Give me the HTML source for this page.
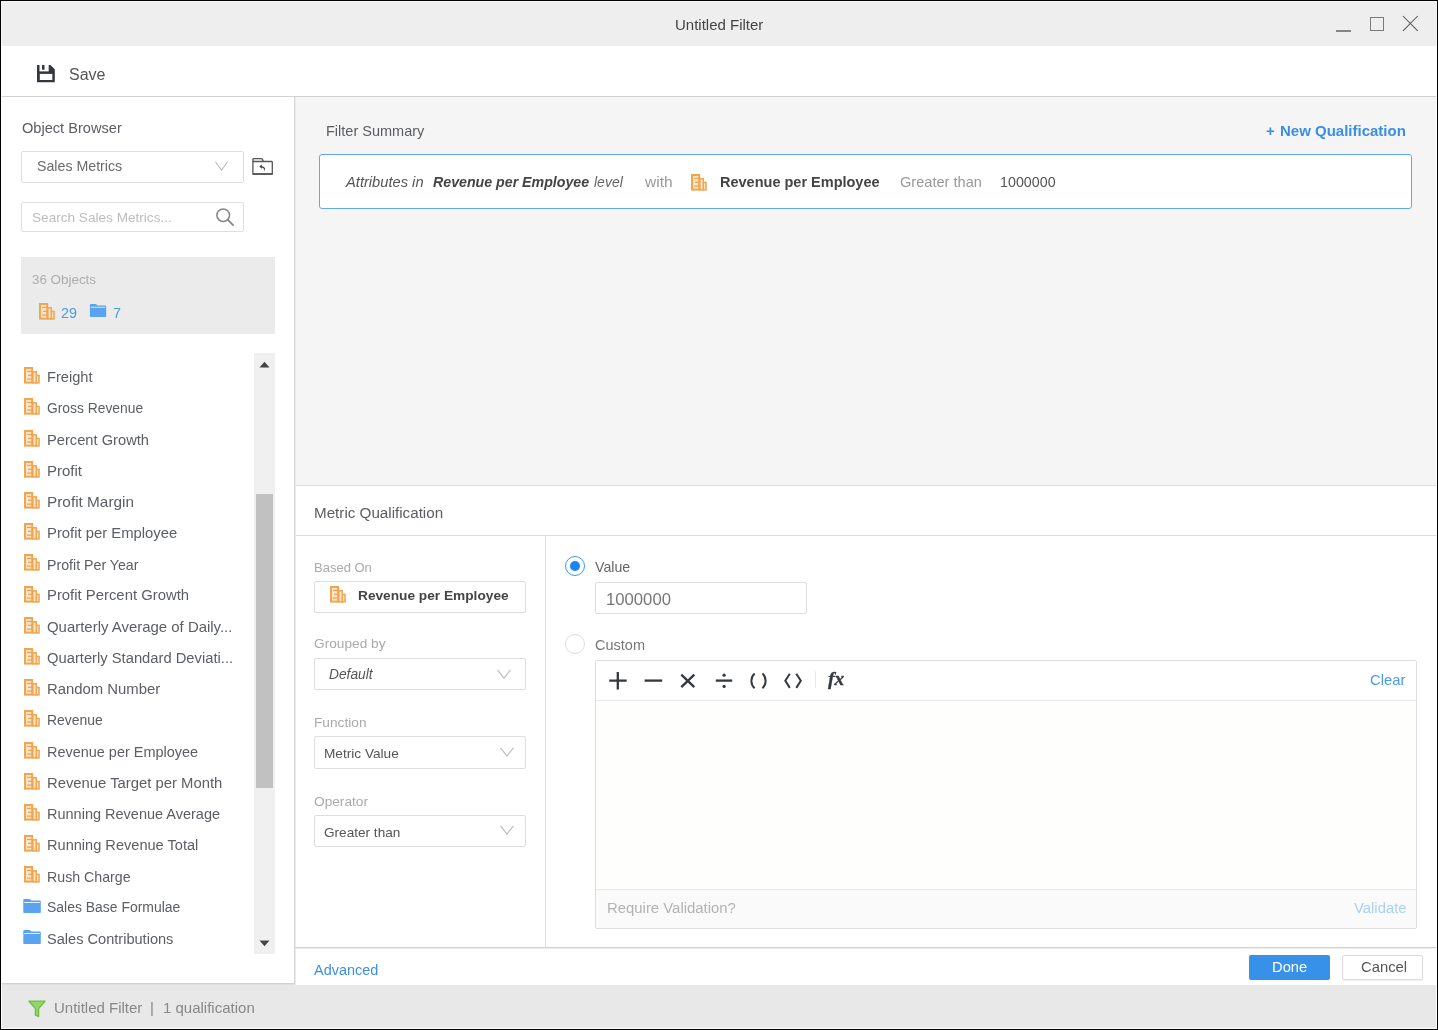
<!DOCTYPE html><html><head><meta charset="utf-8"><style>
html,body{margin:0;padding:0;width:1438px;height:1030px;overflow:hidden;background:#fff;}
body{position:relative;font-family:"Liberation Sans",sans-serif;}
.t{position:absolute;line-height:1;white-space:nowrap;will-change:transform;}
.r{position:absolute;box-sizing:border-box;}
</style></head><body>
<div class="r" style="left:0px;top:0px;width:1438px;height:1030px;background:#000"></div>
<div class="r" style="left:1px;top:1px;width:1436px;height:1028px;background:#fff"></div>
<div class="r" style="left:1px;top:1px;width:1436px;height:45px;background:#f6f6f6"></div>
<div class="r" style="left:2px;top:2px;width:1434px;height:44px;background:#eeeeee"></div>
<div class="t" style="left:674.60px;top:17.30px;font-size:15px;color:#444;">Untitled Filter</div>
<div class="r" style="left:1336px;top:30px;width:15px;height:1.5px;background:#858585"></div>
<div class="r" style="left:1370.3px;top:17.2px;width:14px;height:14px;border:1.4px solid #7a7a7a"></div>
<svg class="r" style="left:1402px;top:15px" width="17" height="17" viewBox="0 0 17 17"><path d="M1 1L15.7 15.9M15.7 1L1 15.9" stroke="#555" stroke-width="1.05"/></svg>
<div class="r" style="left:2px;top:96px;width:1434px;height:1px;background:#d0d0d0"></div>
<svg class="r" style="left:37px;top:65px" width="18" height="18" viewBox="0 0 18 18"><path d="M0 0H13.4L17.8 4.2V17.2H0Z" fill="#33383c"/><rect x="2.5" y="0" width="9.2" height="6.4" fill="#fff"/><rect x="5" y="0" width="2.5" height="4.7" fill="#33383c"/><rect x="2.8" y="8.9" width="12.5" height="6.1" fill="#fff"/></svg>
<div class="t" style="left:69.20px;top:67.16px;font-size:16px;color:#555;">Save</div>
<div class="r" style="left:294px;top:97px;width:1px;height:888px;background:#d6d6d6"></div>
<div class="r" style="left:295px;top:97px;width:1px;height:888px;background:#ececec"></div>
<div class="t" style="left:21.70px;top:120.94px;font-size:14.6px;color:#5a5d61;">Object Browser</div>
<div class="r" style="left:21px;top:151px;width:223px;height:32px;border:1px solid #dedede;border-radius:2px;background:#fff"></div>
<div class="t" style="left:36.70px;top:159.28px;font-size:14.2px;color:#6a6a6a;">Sales Metrics</div>
<svg class="r" style="left:215px;top:161px" width="13" height="10" viewBox="0 0 13 10"><path d="M0.5 0.8L6.5 9.2L12.5 0.8" fill="none" stroke="#bbb" stroke-width="1.1"/></svg>
<svg class="r" style="left:251px;top:157px" width="23" height="19" viewBox="0 0 23 19"><path d="M1.9 4.5V2.4Q1.9 1.6 2.7 1.6H10.3Q10.9 1.6 11.3 2.2L12.5 4.5H20.5Q21.3 4.5 21.3 5.3V17H1.9V4.5H12.5" fill="none" stroke="#555" stroke-width="1.3"/><rect x="1.9" y="16.2" width="19.4" height="1.6" fill="#555"/><path d="M12.5 15.3Q14.6 11.5 10.8 10.4L10.8 11.8L8.3 9.6L10.8 7.5L10.8 8.9Q16.4 10.3 12.5 15.3Z" fill="#444"/></svg>
<div class="r" style="left:21px;top:202px;width:223px;height:30px;border:1px solid #dedede;border-radius:2px;background:#fff"></div>
<div class="t" style="left:31.50px;top:210.69px;font-size:13.6px;color:#bdbdbd;">Search Sales Metrics...</div>
<svg class="r" style="left:215px;top:207px" width="21" height="20" viewBox="0 0 21 20"><circle cx="8.2" cy="8.2" r="6.3" fill="none" stroke="#858585" stroke-width="1.5"/><path d="M12.8 12.8L18.6 18.6" stroke="#858585" stroke-width="1.7"/></svg>
<div class="r" style="left:21px;top:257px;width:254px;height:77px;background:#ebebeb"></div>
<div class="t" style="left:31.50px;top:272.86px;font-size:13.4px;color:#adadad;">36 Objects</div>
<svg class="r" style="left:39px;top:303px" width="16" height="17" viewBox="0 0 16 17"><g fill="#fde6c9" stroke="#efa552"><rect x="11.75" y="8.45" width="3.3" height="7.4" stroke-width="1.5"/><rect x="8.75" y="4.85" width="3.5" height="11" stroke-width="1.5"/><rect x="1" y="1" width="7.2" height="14.6" stroke-width="2"/></g><g stroke="#efa552" stroke-width="1.3"><line x1="3" y1="4.4" x2="8.2" y2="4.4"/><line x1="4" y1="8.3" x2="8.2" y2="8.3"/><line x1="3" y1="12.1" x2="8.2" y2="12.1"/></g></svg><div class="t" style="left:61.00px;top:305.81px;font-size:14.4px;color:#4a9be8;">29</div>
<svg class="r" style="left:89px;top:304px" width="18" height="13" viewBox="0 0 18 14"><path d="M0.3 1 Q0.3 0 1.3 0 L6 0 Q6.8 0 7.4 0.6 L8.3 1.5 L17 1.5 Q17.8 1.5 17.8 2.3 L17.8 13.3 Q17.8 14 17 14 L1 14 Q0.3 14 0.3 13.3 Z" fill="#59a4f1"/><rect x="1.3" y="3" width="15.5" height="1" fill="#e4f0fd"/></svg><div class="t" style="left:112.60px;top:305.81px;font-size:14.4px;color:#4a9be8;">7</div>
<svg class="r" style="left:24px;top:367.2px" width="16" height="17" viewBox="0 0 16 17"><g fill="#fde6c9" stroke="#efa552"><rect x="11.75" y="8.45" width="3.3" height="7.4" stroke-width="1.5"/><rect x="8.75" y="4.85" width="3.5" height="11" stroke-width="1.5"/><rect x="1" y="1" width="7.2" height="14.6" stroke-width="2"/></g><g stroke="#efa552" stroke-width="1.3"><line x1="3" y1="4.4" x2="8.2" y2="4.4"/><line x1="4" y1="8.3" x2="8.2" y2="8.3"/><line x1="3" y1="12.1" x2="8.2" y2="12.1"/></g></svg><div class="t" style="left:46.70px;top:370.22px;font-size:14.63px;color:#5b5e62;">Freight</div>
<svg class="r" style="left:24px;top:398.4px" width="16" height="17" viewBox="0 0 16 17"><g fill="#fde6c9" stroke="#efa552"><rect x="11.75" y="8.45" width="3.3" height="7.4" stroke-width="1.5"/><rect x="8.75" y="4.85" width="3.5" height="11" stroke-width="1.5"/><rect x="1" y="1" width="7.2" height="14.6" stroke-width="2"/></g><g stroke="#efa552" stroke-width="1.3"><line x1="3" y1="4.4" x2="8.2" y2="4.4"/><line x1="4" y1="8.3" x2="8.2" y2="8.3"/><line x1="3" y1="12.1" x2="8.2" y2="12.1"/></g></svg><div class="t" style="left:46.70px;top:402.08px;font-size:13.84px;color:#5b5e62;">Gross Revenue</div>
<svg class="r" style="left:24px;top:429.6px" width="16" height="17" viewBox="0 0 16 17"><g fill="#fde6c9" stroke="#efa552"><rect x="11.75" y="8.45" width="3.3" height="7.4" stroke-width="1.5"/><rect x="8.75" y="4.85" width="3.5" height="11" stroke-width="1.5"/><rect x="1" y="1" width="7.2" height="14.6" stroke-width="2"/></g><g stroke="#efa552" stroke-width="1.3"><line x1="3" y1="4.4" x2="8.2" y2="4.4"/><line x1="4" y1="8.3" x2="8.2" y2="8.3"/><line x1="3" y1="12.1" x2="8.2" y2="12.1"/></g></svg><div class="t" style="left:46.70px;top:432.56px;font-size:14.69px;color:#5b5e62;">Percent Growth</div>
<svg class="r" style="left:24px;top:460.8px" width="16" height="17" viewBox="0 0 16 17"><g fill="#fde6c9" stroke="#efa552"><rect x="11.75" y="8.45" width="3.3" height="7.4" stroke-width="1.5"/><rect x="8.75" y="4.85" width="3.5" height="11" stroke-width="1.5"/><rect x="1" y="1" width="7.2" height="14.6" stroke-width="2"/></g><g stroke="#efa552" stroke-width="1.3"><line x1="3" y1="4.4" x2="8.2" y2="4.4"/><line x1="4" y1="8.3" x2="8.2" y2="8.3"/><line x1="3" y1="12.1" x2="8.2" y2="12.1"/></g></svg><div class="t" style="left:46.70px;top:463.49px;font-size:15.02px;color:#5b5e62;">Profit</div>
<svg class="r" style="left:24px;top:492.0px" width="16" height="17" viewBox="0 0 16 17"><g fill="#fde6c9" stroke="#efa552"><rect x="11.75" y="8.45" width="3.3" height="7.4" stroke-width="1.5"/><rect x="8.75" y="4.85" width="3.5" height="11" stroke-width="1.5"/><rect x="1" y="1" width="7.2" height="14.6" stroke-width="2"/></g><g stroke="#efa552" stroke-width="1.3"><line x1="3" y1="4.4" x2="8.2" y2="4.4"/><line x1="4" y1="8.3" x2="8.2" y2="8.3"/><line x1="3" y1="12.1" x2="8.2" y2="12.1"/></g></svg><div class="t" style="left:46.70px;top:494.41px;font-size:15.35px;color:#5b5e62;">Profit Margin</div>
<svg class="r" style="left:24px;top:523.2px" width="16" height="17" viewBox="0 0 16 17"><g fill="#fde6c9" stroke="#efa552"><rect x="11.75" y="8.45" width="3.3" height="7.4" stroke-width="1.5"/><rect x="8.75" y="4.85" width="3.5" height="11" stroke-width="1.5"/><rect x="1" y="1" width="7.2" height="14.6" stroke-width="2"/></g><g stroke="#efa552" stroke-width="1.3"><line x1="3" y1="4.4" x2="8.2" y2="4.4"/><line x1="4" y1="8.3" x2="8.2" y2="8.3"/><line x1="3" y1="12.1" x2="8.2" y2="12.1"/></g></svg><div class="t" style="left:46.70px;top:526.05px;font-size:14.83px;color:#5b5e62;">Profit per Employee</div>
<svg class="r" style="left:24px;top:554.4px" width="16" height="17" viewBox="0 0 16 17"><g fill="#fde6c9" stroke="#efa552"><rect x="11.75" y="8.45" width="3.3" height="7.4" stroke-width="1.5"/><rect x="8.75" y="4.85" width="3.5" height="11" stroke-width="1.5"/><rect x="1" y="1" width="7.2" height="14.6" stroke-width="2"/></g><g stroke="#efa552" stroke-width="1.3"><line x1="3" y1="4.4" x2="8.2" y2="4.4"/><line x1="4" y1="8.3" x2="8.2" y2="8.3"/><line x1="3" y1="12.1" x2="8.2" y2="12.1"/></g></svg><div class="t" style="left:46.70px;top:557.79px;font-size:14.19px;color:#5b5e62;">Profit Per Year</div>
<svg class="r" style="left:24px;top:585.6px" width="16" height="17" viewBox="0 0 16 17"><g fill="#fde6c9" stroke="#efa552"><rect x="11.75" y="8.45" width="3.3" height="7.4" stroke-width="1.5"/><rect x="8.75" y="4.85" width="3.5" height="11" stroke-width="1.5"/><rect x="1" y="1" width="7.2" height="14.6" stroke-width="2"/></g><g stroke="#efa552" stroke-width="1.3"><line x1="3" y1="4.4" x2="8.2" y2="4.4"/><line x1="4" y1="8.3" x2="8.2" y2="8.3"/><line x1="3" y1="12.1" x2="8.2" y2="12.1"/></g></svg><div class="t" style="left:46.70px;top:588.41px;font-size:14.87px;color:#5b5e62;">Profit Percent Growth</div>
<svg class="r" style="left:24px;top:616.8px" width="16" height="17" viewBox="0 0 16 17"><g fill="#fde6c9" stroke="#efa552"><rect x="11.75" y="8.45" width="3.3" height="7.4" stroke-width="1.5"/><rect x="8.75" y="4.85" width="3.5" height="11" stroke-width="1.5"/><rect x="1" y="1" width="7.2" height="14.6" stroke-width="2"/></g><g stroke="#efa552" stroke-width="1.3"><line x1="3" y1="4.4" x2="8.2" y2="4.4"/><line x1="4" y1="8.3" x2="8.2" y2="8.3"/><line x1="3" y1="12.1" x2="8.2" y2="12.1"/></g></svg><div class="t" style="left:46.70px;top:619.54px;font-size:14.95px;color:#5b5e62;">Quarterly Average of Daily...</div>
<svg class="r" style="left:24px;top:648.0px" width="16" height="17" viewBox="0 0 16 17"><g fill="#fde6c9" stroke="#efa552"><rect x="11.75" y="8.45" width="3.3" height="7.4" stroke-width="1.5"/><rect x="8.75" y="4.85" width="3.5" height="11" stroke-width="1.5"/><rect x="1" y="1" width="7.2" height="14.6" stroke-width="2"/></g><g stroke="#efa552" stroke-width="1.3"><line x1="3" y1="4.4" x2="8.2" y2="4.4"/><line x1="4" y1="8.3" x2="8.2" y2="8.3"/><line x1="3" y1="12.1" x2="8.2" y2="12.1"/></g></svg><div class="t" style="left:46.70px;top:650.91px;font-size:14.76px;color:#5b5e62;">Quarterly Standard Deviati...</div>
<svg class="r" style="left:24px;top:679.2px" width="16" height="17" viewBox="0 0 16 17"><g fill="#fde6c9" stroke="#efa552"><rect x="11.75" y="8.45" width="3.3" height="7.4" stroke-width="1.5"/><rect x="8.75" y="4.85" width="3.5" height="11" stroke-width="1.5"/><rect x="1" y="1" width="7.2" height="14.6" stroke-width="2"/></g><g stroke="#efa552" stroke-width="1.3"><line x1="3" y1="4.4" x2="8.2" y2="4.4"/><line x1="4" y1="8.3" x2="8.2" y2="8.3"/><line x1="3" y1="12.1" x2="8.2" y2="12.1"/></g></svg><div class="t" style="left:46.70px;top:682.00px;font-size:14.88px;color:#5b5e62;">Random Number</div>
<svg class="r" style="left:24px;top:710.4px" width="16" height="17" viewBox="0 0 16 17"><g fill="#fde6c9" stroke="#efa552"><rect x="11.75" y="8.45" width="3.3" height="7.4" stroke-width="1.5"/><rect x="8.75" y="4.85" width="3.5" height="11" stroke-width="1.5"/><rect x="1" y="1" width="7.2" height="14.6" stroke-width="2"/></g><g stroke="#efa552" stroke-width="1.3"><line x1="3" y1="4.4" x2="8.2" y2="4.4"/><line x1="4" y1="8.3" x2="8.2" y2="8.3"/><line x1="3" y1="12.1" x2="8.2" y2="12.1"/></g></svg><div class="t" style="left:46.70px;top:713.99px;font-size:13.95px;color:#5b5e62;">Revenue</div>
<svg class="r" style="left:24px;top:741.6px" width="16" height="17" viewBox="0 0 16 17"><g fill="#fde6c9" stroke="#efa552"><rect x="11.75" y="8.45" width="3.3" height="7.4" stroke-width="1.5"/><rect x="8.75" y="4.85" width="3.5" height="11" stroke-width="1.5"/><rect x="1" y="1" width="7.2" height="14.6" stroke-width="2"/></g><g stroke="#efa552" stroke-width="1.3"><line x1="3" y1="4.4" x2="8.2" y2="4.4"/><line x1="4" y1="8.3" x2="8.2" y2="8.3"/><line x1="3" y1="12.1" x2="8.2" y2="12.1"/></g></svg><div class="t" style="left:46.70px;top:744.76px;font-size:14.46px;color:#5b5e62;">Revenue per Employee</div>
<svg class="r" style="left:24px;top:772.8px" width="16" height="17" viewBox="0 0 16 17"><g fill="#fde6c9" stroke="#efa552"><rect x="11.75" y="8.45" width="3.3" height="7.4" stroke-width="1.5"/><rect x="8.75" y="4.85" width="3.5" height="11" stroke-width="1.5"/><rect x="1" y="1" width="7.2" height="14.6" stroke-width="2"/></g><g stroke="#efa552" stroke-width="1.3"><line x1="3" y1="4.4" x2="8.2" y2="4.4"/><line x1="4" y1="8.3" x2="8.2" y2="8.3"/><line x1="3" y1="12.1" x2="8.2" y2="12.1"/></g></svg><div class="t" style="left:46.70px;top:775.65px;font-size:14.83px;color:#5b5e62;">Revenue Target per Month</div>
<svg class="r" style="left:24px;top:804.0px" width="16" height="17" viewBox="0 0 16 17"><g fill="#fde6c9" stroke="#efa552"><rect x="11.75" y="8.45" width="3.3" height="7.4" stroke-width="1.5"/><rect x="8.75" y="4.85" width="3.5" height="11" stroke-width="1.5"/><rect x="1" y="1" width="7.2" height="14.6" stroke-width="2"/></g><g stroke="#efa552" stroke-width="1.3"><line x1="3" y1="4.4" x2="8.2" y2="4.4"/><line x1="4" y1="8.3" x2="8.2" y2="8.3"/><line x1="3" y1="12.1" x2="8.2" y2="12.1"/></g></svg><div class="t" style="left:46.70px;top:807.12px;font-size:14.51px;color:#5b5e62;">Running Revenue Average</div>
<svg class="r" style="left:24px;top:835.2px" width="16" height="17" viewBox="0 0 16 17"><g fill="#fde6c9" stroke="#efa552"><rect x="11.75" y="8.45" width="3.3" height="7.4" stroke-width="1.5"/><rect x="8.75" y="4.85" width="3.5" height="11" stroke-width="1.5"/><rect x="1" y="1" width="7.2" height="14.6" stroke-width="2"/></g><g stroke="#efa552" stroke-width="1.3"><line x1="3" y1="4.4" x2="8.2" y2="4.4"/><line x1="4" y1="8.3" x2="8.2" y2="8.3"/><line x1="3" y1="12.1" x2="8.2" y2="12.1"/></g></svg><div class="t" style="left:46.70px;top:838.25px;font-size:14.59px;color:#5b5e62;">Running Revenue Total</div>
<svg class="r" style="left:24px;top:866.4px" width="16" height="17" viewBox="0 0 16 17"><g fill="#fde6c9" stroke="#efa552"><rect x="11.75" y="8.45" width="3.3" height="7.4" stroke-width="1.5"/><rect x="8.75" y="4.85" width="3.5" height="11" stroke-width="1.5"/><rect x="1" y="1" width="7.2" height="14.6" stroke-width="2"/></g><g stroke="#efa552" stroke-width="1.3"><line x1="3" y1="4.4" x2="8.2" y2="4.4"/><line x1="4" y1="8.3" x2="8.2" y2="8.3"/><line x1="3" y1="12.1" x2="8.2" y2="12.1"/></g></svg><div class="t" style="left:46.70px;top:869.79px;font-size:14.19px;color:#5b5e62;">Rush Charge</div>
<svg class="r" style="left:23px;top:899.1px" width="18" height="14" viewBox="0 0 18 14"><path d="M0.3 1 Q0.3 0 1.3 0 L6 0 Q6.8 0 7.4 0.6 L8.3 1.5 L17 1.5 Q17.8 1.5 17.8 2.3 L17.8 13.3 Q17.8 14 17 14 L1 14 Q0.3 14 0.3 13.3 Z" fill="#59a4f1"/><rect x="1.3" y="3" width="15.5" height="1" fill="#e4f0fd"/></svg><div class="t" style="left:46.70px;top:901.19px;font-size:13.95px;color:#5b5e62;">Sales Base Formulae</div>
<svg class="r" style="left:23px;top:930.3px" width="18" height="14" viewBox="0 0 18 14"><path d="M0.3 1 Q0.3 0 1.3 0 L6 0 Q6.8 0 7.4 0.6 L8.3 1.5 L17 1.5 Q17.8 1.5 17.8 2.3 L17.8 13.3 Q17.8 14 17 14 L1 14 Q0.3 14 0.3 13.3 Z" fill="#59a4f1"/><rect x="1.3" y="3" width="15.5" height="1" fill="#e4f0fd"/></svg><div class="t" style="left:46.70px;top:931.85px;font-size:14.59px;color:#5b5e62;">Sales Contributions</div>
<div class="r" style="left:254px;top:353px;width:21px;height:601px;background:#f0f0f0"></div>
<div class="r" style="left:256px;top:494px;width:17px;height:294px;background:#c1c1c1"></div>
<svg class="r" style="left:259px;top:361px" width="11" height="7" viewBox="0 0 11 7"><path d="M0.5 6.5L5.5 0.8L10.5 6.5Z" fill="#444"/></svg>
<svg class="r" style="left:259px;top:940px" width="11" height="7" viewBox="0 0 11 7"><path d="M0.5 0.5L5.5 6.2L10.5 0.5Z" fill="#444"/></svg>
<div class="r" style="left:2px;top:983px;width:293px;height:1px;background:#d0d0d0"></div>
<div class="r" style="left:2px;top:984px;width:293px;height:1px;background:#e0e0e0"></div>
<div class="r" style="left:2px;top:985px;width:1434px;height:43px;background:#e8e8e8"></div>
<svg class="r" style="left:28px;top:1000px" width="18" height="18" viewBox="0 0 18 18"><path d="M1 1.2H17L10.6 8.6V16.5L7.4 15.2V8.6Z" fill="#92d56b" stroke="#6cbf45" stroke-width="1.3" stroke-linejoin="round"/></svg>
<div class="t" style="left:54.40px;top:1000.30px;font-size:15px;color:#888;">Untitled Filter</div>
<div class="t" style="left:150.30px;top:1000.30px;font-size:15px;color:#888;">|</div>
<div class="t" style="left:163.30px;top:1000.30px;font-size:15px;color:#888;">1 qualification</div>
<div class="r" style="left:296px;top:97px;width:1140px;height:388px;background:#f5f5f5"></div>
<div class="t" style="left:325.70px;top:123.63px;font-size:14.5px;color:#5a5d61;">Filter Summary</div>
<div class="t" style="left:1266.00px;top:122.80px;font-size:15px;color:#3a8ee6;font-weight:bold">+</div>
<div class="t" style="right:32.00px;top:122.80px;font-size:15px;color:#3a8ee6;font-weight:bold">New Qualification</div>
<div class="r" style="left:319px;top:154px;width:1093px;height:55px;border:1px solid #60a8f2;border-radius:3px;background:#fff"></div>
<div class="t" style="left:345.60px;top:174.66px;font-size:14.7px;color:#555;font-style:italic">Attributes in</div>
<div class="t" style="left:433.10px;top:175.08px;font-size:14.2px;color:#444;font-style:italic;font-weight:bold">Revenue per Employee</div>
<div class="t" style="left:594.40px;top:175.25px;font-size:14px;color:#666;font-style:italic">level</div>
<div class="t" style="left:644.50px;top:173.98px;font-size:15.5px;color:#999;">with</div>
<svg class="r" style="left:691px;top:174px" width="16" height="17" viewBox="0 0 16 17"><g fill="#fde6c9" stroke="#efa552"><rect x="11.75" y="8.45" width="3.3" height="7.4" stroke-width="1.5"/><rect x="8.75" y="4.85" width="3.5" height="11" stroke-width="1.5"/><rect x="1" y="1" width="7.2" height="14.6" stroke-width="2"/></g><g stroke="#efa552" stroke-width="1.3"><line x1="3" y1="4.4" x2="8.2" y2="4.4"/><line x1="4" y1="8.3" x2="8.2" y2="8.3"/><line x1="3" y1="12.1" x2="8.2" y2="12.1"/></g></svg><div class="t" style="left:719.50px;top:174.83px;font-size:14.5px;color:#444;font-weight:bold">Revenue per Employee</div>
<div class="t" style="left:899.80px;top:174.74px;font-size:14.6px;color:#999;">Greater than</div>
<div class="t" style="left:999.50px;top:175.00px;font-size:14.3px;color:#555;">1000000</div>
<div class="r" style="left:296px;top:485px;width:1140px;height:1px;background:#dcdcdc"></div>
<div class="r" style="left:296px;top:486px;width:1140px;height:49px;background:#fff"></div>
<div class="t" style="left:314.30px;top:505.43px;font-size:15.2px;color:#5a5d61;">Metric Qualification</div>
<div class="r" style="left:296px;top:535px;width:1140px;height:1px;background:#dcdcdc"></div>
<div class="r" style="left:545px;top:536px;width:1px;height:411px;background:#dcdcdc"></div>
<div class="t" style="left:314.30px;top:561.20px;font-size:13px;color:#aaa;">Based On</div>
<div class="r" style="left:314px;top:581px;width:212px;height:32px;border:1px solid #dedede;border-radius:2px;background:#fff"></div>
<svg class="r" style="left:330px;top:586px" width="16" height="17" viewBox="0 0 16 17"><g fill="#fde6c9" stroke="#efa552"><rect x="11.75" y="8.45" width="3.3" height="7.4" stroke-width="1.5"/><rect x="8.75" y="4.85" width="3.5" height="11" stroke-width="1.5"/><rect x="1" y="1" width="7.2" height="14.6" stroke-width="2"/></g><g stroke="#efa552" stroke-width="1.3"><line x1="3" y1="4.4" x2="8.2" y2="4.4"/><line x1="4" y1="8.3" x2="8.2" y2="8.3"/><line x1="3" y1="12.1" x2="8.2" y2="12.1"/></g></svg><div class="t" style="left:358.30px;top:588.70px;font-size:13.7px;color:#444;font-weight:bold">Revenue per Employee</div>
<div class="t" style="left:314.10px;top:637.40px;font-size:13.7px;color:#aaa;">Grouped by</div>
<div class="r" style="left:314px;top:658px;width:212px;height:32px;border:1px solid #dedede;border-radius:2px;background:#fff"></div>
<div class="t" style="left:329.00px;top:668.16px;font-size:13.75px;color:#555;font-style:italic">Default</div>
<svg class="r" style="left:497px;top:669px" width="14" height="10" viewBox="0 0 14 10"><path d="M0.5 0.8L7 9L13.5 0.8" fill="none" stroke="#bbb" stroke-width="1.1"/></svg>
<div class="t" style="left:314.00px;top:716.20px;font-size:13.7px;color:#aaa;">Function</div>
<div class="r" style="left:314px;top:736px;width:212px;height:33px;border:1px solid #dedede;border-radius:2px;background:#fff"></div>
<div class="t" style="left:324.00px;top:747.25px;font-size:13.65px;color:#555;">Metric Value</div>
<svg class="r" style="left:500px;top:747px" width="14" height="10" viewBox="0 0 14 10"><path d="M0.5 0.8L7 9L13.5 0.8" fill="none" stroke="#bbb" stroke-width="1.1"/></svg>
<div class="t" style="left:314.00px;top:794.90px;font-size:13.7px;color:#aaa;">Operator</div>
<div class="r" style="left:314px;top:815px;width:212px;height:32px;border:1px solid #dedede;border-radius:2px;background:#fff"></div>
<div class="t" style="left:324.00px;top:825.79px;font-size:13.6px;color:#555;">Greater than</div>
<svg class="r" style="left:500px;top:825px" width="14" height="10" viewBox="0 0 14 10"><path d="M0.5 0.8L7 9L13.5 0.8" fill="none" stroke="#bbb" stroke-width="1.1"/></svg>
<div class="r" style="left:565px;top:556px;width:20px;height:20px;border:1.5px solid #4096f5;border-radius:50%;background:#fff"></div>
<div class="r" style="left:569.7px;top:560.7px;width:10.6px;height:10.6px;border-radius:50%;background:#1a84f5"></div>
<div class="t" style="left:595.30px;top:560.28px;font-size:14.2px;color:#666;">Value</div>
<div class="r" style="left:595px;top:582px;width:212px;height:32px;border:1px solid #dedede;border-radius:2px;background:#fff"></div>
<div class="t" style="left:606.00px;top:591.56px;font-size:16.7px;color:#777;">1000000</div>
<div class="r" style="left:565px;top:634px;width:20px;height:20px;border:1px solid #dddddd;border-radius:50%;background:#fff"></div>
<div class="t" style="left:595.30px;top:637.83px;font-size:14.5px;color:#777;">Custom</div>
<div class="r" style="left:595px;top:660px;width:822px;height:269px;border:1px solid #dedede;border-radius:2px;background:#fefefc"></div>
<div class="r" style="left:596px;top:661px;width:820px;height:39px;background:#fff"></div>
<div class="r" style="left:596px;top:700px;width:820px;height:1px;background:#e6e6e6"></div>
<div class="r" style="left:596px;top:889px;width:820px;height:39px;background:#fafafa"></div>
<div class="r" style="left:596px;top:889px;width:820px;height:1px;background:#e9e9e9"></div>
<svg class="r" style="left:600px;top:665px" width="260" height="30" viewBox="0 0 260 30"><g stroke="#33393e" stroke-width="2.3" fill="none"><path d="M9.2 15.6H26.7M17.8 7.1V24.6"/><path d="M44.6 15.6H62.2"/><path d="M81.3 9.6L94.3 22.1M94.3 9.6L81.3 22.1"/><path d="M115.8 15.6H132.2"/></g><g fill="#33393e"><circle cx="124.1" cy="10.2" r="1.6"/><circle cx="124.1" cy="21.4" r="1.6"/></g><g stroke="#33393e" stroke-width="2" fill="none"><path d="M154.6 8.6C150.3 12.5 150.3 19.3 154.6 23.2"/><path d="M162.4 8.6C166.7 12.5 166.7 19.3 162.4 23.2"/><path d="M189.8 8.8L185.3 15.8L189.8 22.9"/><path d="M196.3 8.8L200.8 15.8L196.3 22.9"/></g><rect x="215" y="6.3" width="1" height="16.6" fill="#e8e8e8"/></svg>
<div class="t" style="left:827.50px;top:668.99px;font-size:19.5px;color:#33393e;font-family:Liberation Serif;font-style:italic;font-weight:bold;-webkit-text-stroke:0.3px #33393e">fx</div>
<div class="t" style="right:33.00px;top:673.17px;font-size:14.8px;color:#4a9be8;">Clear</div>
<div class="t" style="left:606.60px;top:900.79px;font-size:14.9px;color:#b3b3b3;">Require Validation?</div>
<div class="t" style="right:31.80px;top:901.23px;font-size:14.85px;color:#a9d1f6;">Validate</div>
<div class="r" style="left:295px;top:947px;width:1141px;height:1px;background:#d2d2d2"></div>
<div class="r" style="left:295px;top:948px;width:1141px;height:1px;background:#ededed"></div>
<div class="t" style="left:313.90px;top:962.97px;font-size:14.45px;color:#3d8fe6;">Advanced</div>
<div class="r" style="left:1249px;top:955px;width:81px;height:25px;background:#3891e9;border-radius:2px"></div>
<div class="t" style="left:1272.40px;top:959.81px;font-size:14.75px;color:#fff;">Done</div>
<div class="r" style="left:1342px;top:955px;width:81px;height:25px;border:1px solid #dcdcdc;border-radius:2px;background:#fff;box-shadow:0 1px 1px rgba(0,0,0,0.06)"></div>
<div class="t" style="left:1360.90px;top:960.27px;font-size:14.8px;color:#555;">Cancel</div>
</body></html>
